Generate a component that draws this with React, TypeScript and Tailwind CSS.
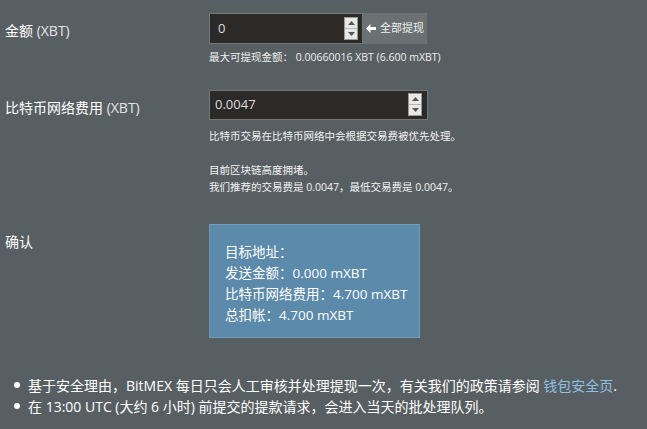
import React from 'react';

const font = { fontFamily: '"Open Sans", "Noto Sans CJK SC", sans-serif' };

function Spinner() {
  return (
    <div className="flex h-[23px] w-[14px] flex-col border border-[#9a9a9a] bg-[#e8e8e8]">
      <div className="flex flex-1 items-center justify-center border-b border-[#b5b5b5]">
        <svg width="7" height="4" viewBox="0 0 7 4">
          <path d="M0 4 L3.5 0 L7 4 Z" fill="#555" />
        </svg>
      </div>
      <div className="flex flex-1 items-center justify-center">
        <svg width="7" height="4" viewBox="0 0 7 4">
          <path d="M0 0 L3.5 4 L7 0 Z" fill="#555" />
        </svg>
      </div>
    </div>
  );
}

export default function App() {
  return (
    <div className="h-[429px] w-[647px] overflow-hidden bg-[#585f62] text-white" style={font}>
      <div className="flex pt-[13px]">
        <div className="w-[209px] pl-[5px] pt-[7px] text-[14px]">
          金额 <span className="text-[#e6e6e6]">(XBT)</span>
        </div>
        <div>
          <div className="flex h-[31px]">
            <div className="flex w-[154px] items-center justify-between border border-[#777] bg-[#2c2a29] pl-[8px] pr-[4px]">
              <span className="text-[13px] text-[#ddd]">0</span>
              <Spinner />
            </div>
            <div className="flex w-[64px] items-center justify-center gap-[4px] bg-[#6b7072] text-[11px] text-[#f0f0f0]">
              <svg width="10" height="9" viewBox="0 0 10 9">
                <path d="M0 4.5 L4.5 0 L4.5 3 L10 3 L10 6 L4.5 6 L4.5 9 Z" fill="#fff" />
              </svg>
              全部提现
            </div>
          </div>
          <div className="mt-[6px] text-[10.5px] text-[#eee]">
            最大可提现金额： 0.00660016 XBT (6.600 mXBT)
          </div>
        </div>
      </div>

      <div className="flex pt-[24px]">
        <div className="w-[209px] pl-[5px] pt-[7px] text-[14px]">
          比特币网络费用 <span className="text-[#e6e6e6]">(XBT)</span>
        </div>
        <div>
          <div className="flex h-[30px] w-[219px] items-center justify-between border border-[#777] bg-[#2c2a29] pl-[5px] pr-[5px]">
            <span className="text-[13px] text-[#ddd]">0.0047</span>
            <Spinner />
          </div>
          <div className="mt-[8px] text-[10.5px] leading-[17px] text-[#f2f2f2]">
            <div>比特币交易在比特币网络中会根据交易费被优先处理。</div>
            <div className="mt-[17px]">目前区块链高度拥堵。</div>
            <div>我们推荐的交易费是 0.0047，最低交易费是 0.0047。</div>
          </div>
        </div>
      </div>

      <div className="flex pt-[28px]">
        <div className="w-[209px] pl-[5px] pt-[7px] text-[14px]">确认</div>
        <div className="h-[114px] w-[211px] border border-[#6e9cbc] bg-[#5b8aab] pl-[15px] pt-[17px] text-[13.5px] leading-[21px] text-white">
          <div>目标地址：</div>
          <div>发送金额：0.000 mXBT</div>
          <div>比特币网络费用：4.700 mXBT</div>
          <div>总扣帐：4.700 mXBT</div>
        </div>
      </div>

      <ul className="mt-[37px] pl-[14px] text-[14px] leading-[21px] text-white">
        <li className="flex items-center gap-[8px]">
          <span className="h-[6px] w-[6px] rounded-full bg-white" />
          <span>
            基于安全理由，BitMEX 每日只会人工审核并处理提现一次，有关我们的政策请参阅{' '}
            <span className="text-[#8fc1e3]">钱包安全页</span>.
          </span>
        </li>
        <li className="flex items-center gap-[8px]">
          <span className="h-[6px] w-[6px] rounded-full bg-white" />
          <span>在 13:00 UTC (大约 6 小时) 前提交的提款请求，会进入当天的批处理队列。</span>
        </li>
      </ul>
    </div>
  );
}
